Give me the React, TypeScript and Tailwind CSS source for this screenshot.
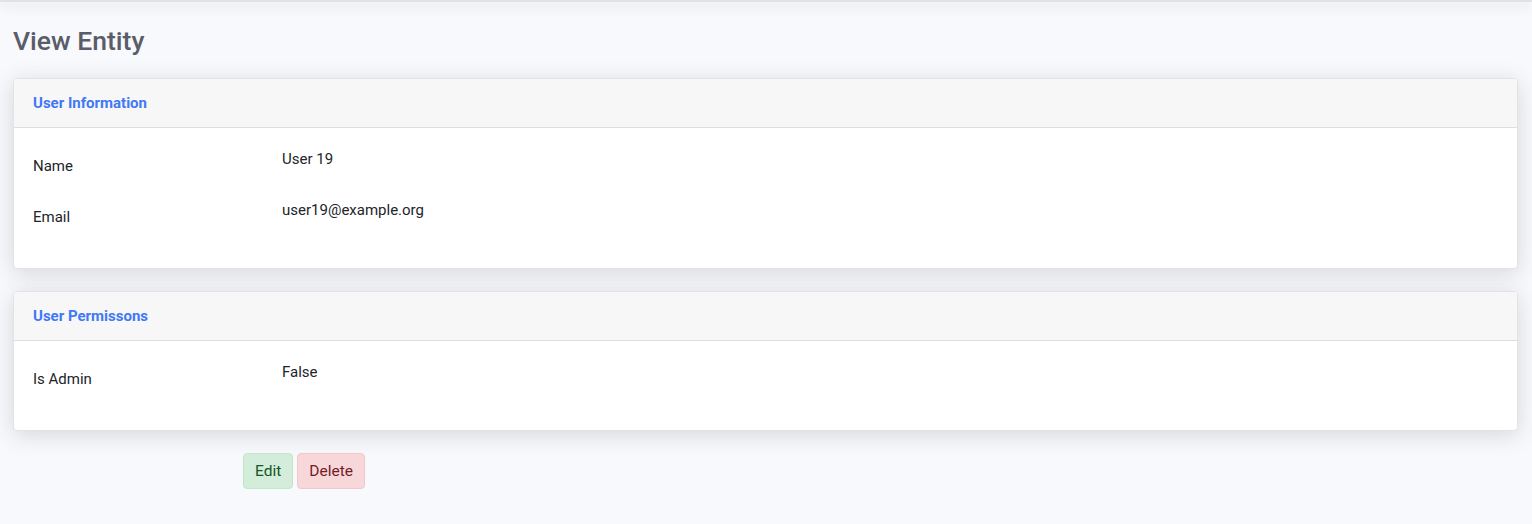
import React from 'react';

interface Field {
  label: string;
  value: string;
}

const Section: React.FC<{ title: string; fields: Field[]; className?: string }> = ({ title, fields, className }) => (
  <div className={`bg-white border border-[#e3e3e6] rounded-[4px] shadow-[0_4px_22px_rgba(58,59,69,0.18)] overflow-hidden ${className ?? ''}`}>
    {/* Header */}
    <div className="h-[49px] px-[19px] flex items-center bg-[#f7f7f7] border-b border-[#dedee0]">
      <h6 className="text-[15px] font-bold text-[#4178f5]">{title}</h6>
    </div>

    {/* Body */}
    <div className="px-[19px] pt-5 pb-[18px]">
      {fields.map((f) => (
        <div key={f.label} className="flex h-[38px] mb-[13px]">
          <div className="w-[249px] pt-[7px] text-[#212529]">{f.label}</div>
          <div className="text-[#212529]">{f.value}</div>
        </div>
      ))}
    </div>
  </div>
);

export default function App() {
  return (
    <div
      className="min-h-[524px] bg-[#f8f9fc] text-[15px] leading-[22px]"
      style={{ fontFamily: 'Roboto, "Noto Sans", "Liberation Sans", sans-serif' }}
    >
      {/* navbar shadow from above */}
      <div className="h-[2px] bg-[#e2e2e5] shadow-[0_3px_12px_rgba(58,59,69,0.25)]" />

      <div className="pl-[13px] pr-[14px] pt-[23px]">
        <h1 className="text-[26.5px] leading-[32px] font-medium text-[#5a5c69] mb-[21px]">View Entity</h1>

        <Section
          title="User Information"
          fields={[
            { label: 'Name', value: 'User 19' },
            { label: 'Email', value: 'user19@example.org' },
          ]}
        />

        <Section
          className="mt-[22px]"
          title="User Permissons"
          fields={[{ label: 'Is Admin', value: 'False' }]}
        />

        <div className="flex gap-1 mt-[22px] ml-[230px]">
          <button className="h-9 px-[11px] text-[15.5px] rounded-[4px] bg-[#d4edda] border border-[#c3e6cb] text-[#155724]">
            Edit
          </button>
          <button className="h-9 px-[11px] text-[15.5px] rounded-[4px] bg-[#f8d7da] border border-[#f5c6cb] text-[#721c24]">
            Delete
          </button>
        </div>
      </div>
    </div>
  );
}
